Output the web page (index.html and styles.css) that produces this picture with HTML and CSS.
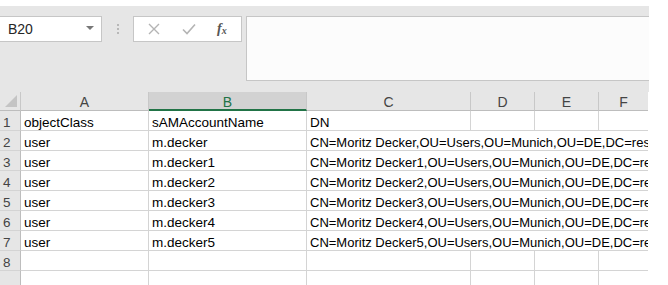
FILE: index.html
```html
<!DOCTYPE html>
<html>
<head>
<meta charset="utf-8">
<link rel="stylesheet" href="styles.css">
</head>
<body>
<div class="app">
  <div class="toolbar">
    <div class="namebox">
      <span class="ref">B20</span>
      <span class="drop"></span>
    </div>
    <div class="dots"><i></i><i></i><i></i></div>
    <div class="fbtns">
      <svg class="ico" width="12" height="12" viewBox="0 0 12 12"><path d="M1 1 L11 11 M11 1 L1 11" stroke="#b4b4b4" stroke-width="1.4" fill="none"/></svg>
      <svg class="ico" width="14" height="12" viewBox="0 0 14 12"><path d="M1 6.5 L5 10.5 L13 1.5" stroke="#b4b4b4" stroke-width="1.6" fill="none"/></svg>
      <span class="fx">f<sub>x</sub></span>
    </div>
    <div class="finput"></div>
  </div>
  <div class="grid">
    <div class="corner"><span class="tri"></span></div>
    <div class="ch">A</div>
    <div class="ch sel">B</div>
    <div class="ch">C</div>
    <div class="ch">D</div>
    <div class="ch">E</div>
    <div class="ch last">F</div>

    <div class="rh">1</div>
    <div class="c">objectClass</div>
    <div class="c">sAMAccountName</div>
    <div class="c">DN</div>
    <div class="c"></div>
    <div class="c"></div>
    <div class="c last"></div>

    <div class="rh">2</div>
    <div class="c">user</div>
    <div class="c">m.decker</div>
    <div class="c span">CN=Moritz Decker,OU=Users,OU=Munich,OU=DE,DC=res</div>

    <div class="rh">3</div>
    <div class="c">user</div>
    <div class="c">m.decker1</div>
    <div class="c span">CN=Moritz Decker1,OU=Users,OU=Munich,OU=DE,DC=re</div>

    <div class="rh">4</div>
    <div class="c">user</div>
    <div class="c">m.decker2</div>
    <div class="c span">CN=Moritz Decker2,OU=Users,OU=Munich,OU=DE,DC=re</div>

    <div class="rh">5</div>
    <div class="c">user</div>
    <div class="c">m.decker3</div>
    <div class="c span">CN=Moritz Decker3,OU=Users,OU=Munich,OU=DE,DC=re</div>

    <div class="rh">6</div>
    <div class="c">user</div>
    <div class="c">m.decker4</div>
    <div class="c span">CN=Moritz Decker4,OU=Users,OU=Munich,OU=DE,DC=re</div>

    <div class="rh">7</div>
    <div class="c">user</div>
    <div class="c">m.decker5</div>
    <div class="c span">CN=Moritz Decker5,OU=Users,OU=Munich,OU=DE,DC=re</div>

    <div class="rh">8</div>
    <div class="c"></div>
    <div class="c"></div>
    <div class="c"></div>
    <div class="c"></div>
    <div class="c"></div>
    <div class="c last"></div>

    <div class="rh"></div>
    <div class="c"></div>
    <div class="c"></div>
    <div class="c"></div>
    <div class="c"></div>
    <div class="c"></div>
    <div class="c last"></div>
  </div>
</div>
</body>
</html>
```

FILE: styles.css
```css
* { box-sizing: border-box; }
html, body { margin: 0; padding: 0; background: #ffffff; }
body {
  font-family: "Liberation Sans", Arial, sans-serif;
  font-size: 13.5px;
  color: #000;
  height: 285px;
  overflow: hidden;
}
.app {
  width: 649px;
  margin-top: 6px;
  background: #e6e6e6;
}
.toolbar {
  display: flex;
  align-items: flex-start;
  padding: 10px 0 11px 0;
  height: 86px;
}
.namebox {
  width: 103px;
  height: 26px;
  margin-left: -1px;
  background: #fff;
  border: 1px solid #c6c6c6;
  display: flex;
  align-items: center;
  justify-content: space-between;
  padding: 0 7px 0 8px;
}
.ref { font-size: 14px; color: #262626; }
.drop {
  width: 0; height: 0;
  border-left: 4px solid transparent;
  border-right: 4px solid transparent;
  border-top: 4px solid #777;
  margin-top: -2px;
}
.dots {
  width: 31px;
  height: 26px;
  display: flex;
  flex-direction: column;
  align-items: center;
  justify-content: center;
  gap: 2px;
}
.dots i { display: block; width: 2px; height: 2px; background: #b8b8b8; }
.fbtns {
  width: 109px;
  height: 26px;
  background: #fff;
  border: 1px solid #c6c6c6;
  display: flex;
  align-items: center;
  padding-left: 14px;
  gap: 22px;
}
.fx {
  font-family: "Liberation Serif", serif;
  font-style: italic;
  font-weight: bold;
  font-size: 14px;
  color: #555;
  margin-left: -1px;
}
.fx sub { font-size: 10px; vertical-align: -1px; }
.finput {
  flex: 1;
  margin-left: 4px;
  height: 65px;
  background: #fcfcfc;
  border: 1px solid #c6c6c6;
  border-right: 0;
}
.grid {
  display: grid;
  grid-template-columns: 21px 128px 158px 164px 64px 64px 49px;
  grid-template-rows: 19px repeat(8, 20px) 20px;
  background: #fff;
}
.corner {
  background: #e6e6e6;
  border-right: 1px solid #c8c8c8;
  border-bottom: 1px solid #bdbdbd;
  position: relative;
}
.tri {
  position: absolute;
  right: 3px;
  bottom: 3px;
  width: 0; height: 0;
  border-left: 12px solid transparent;
  border-bottom: 12px solid #c4c4c4;
}
.ch {
  background: #e6e6e6;
  border-bottom: 1px solid #bdbdbd;
  border-right: 1px solid #c8c8c8;
  text-align: center;
  color: #444;
  font-size: 14px;
  line-height: 18px;
  padding-top: 1px;
}
.ch.sel {
  background: #d2d2d2;
  color: #217346;
  border-bottom: 2px solid #217346;
}
.ch.last { border-right: 0; }
.rh {
  background: #e6e6e6;
  border-right: 1px solid #bdbdbd;
  border-bottom: 1px solid #d4d4d4;
  color: #444;
  padding-left: 3px;
  line-height: 23px;
}
.c {
  border-right: 1px solid #d4d4d4;
  border-bottom: 1px solid #d4d4d4;
  padding-left: 3px;
  line-height: 23px;
  white-space: nowrap;
  overflow: hidden;
}
.c.last { border-right: 0; }
.c.span { grid-column: span 4; border-right: 0; font-size: 13px; }
```
